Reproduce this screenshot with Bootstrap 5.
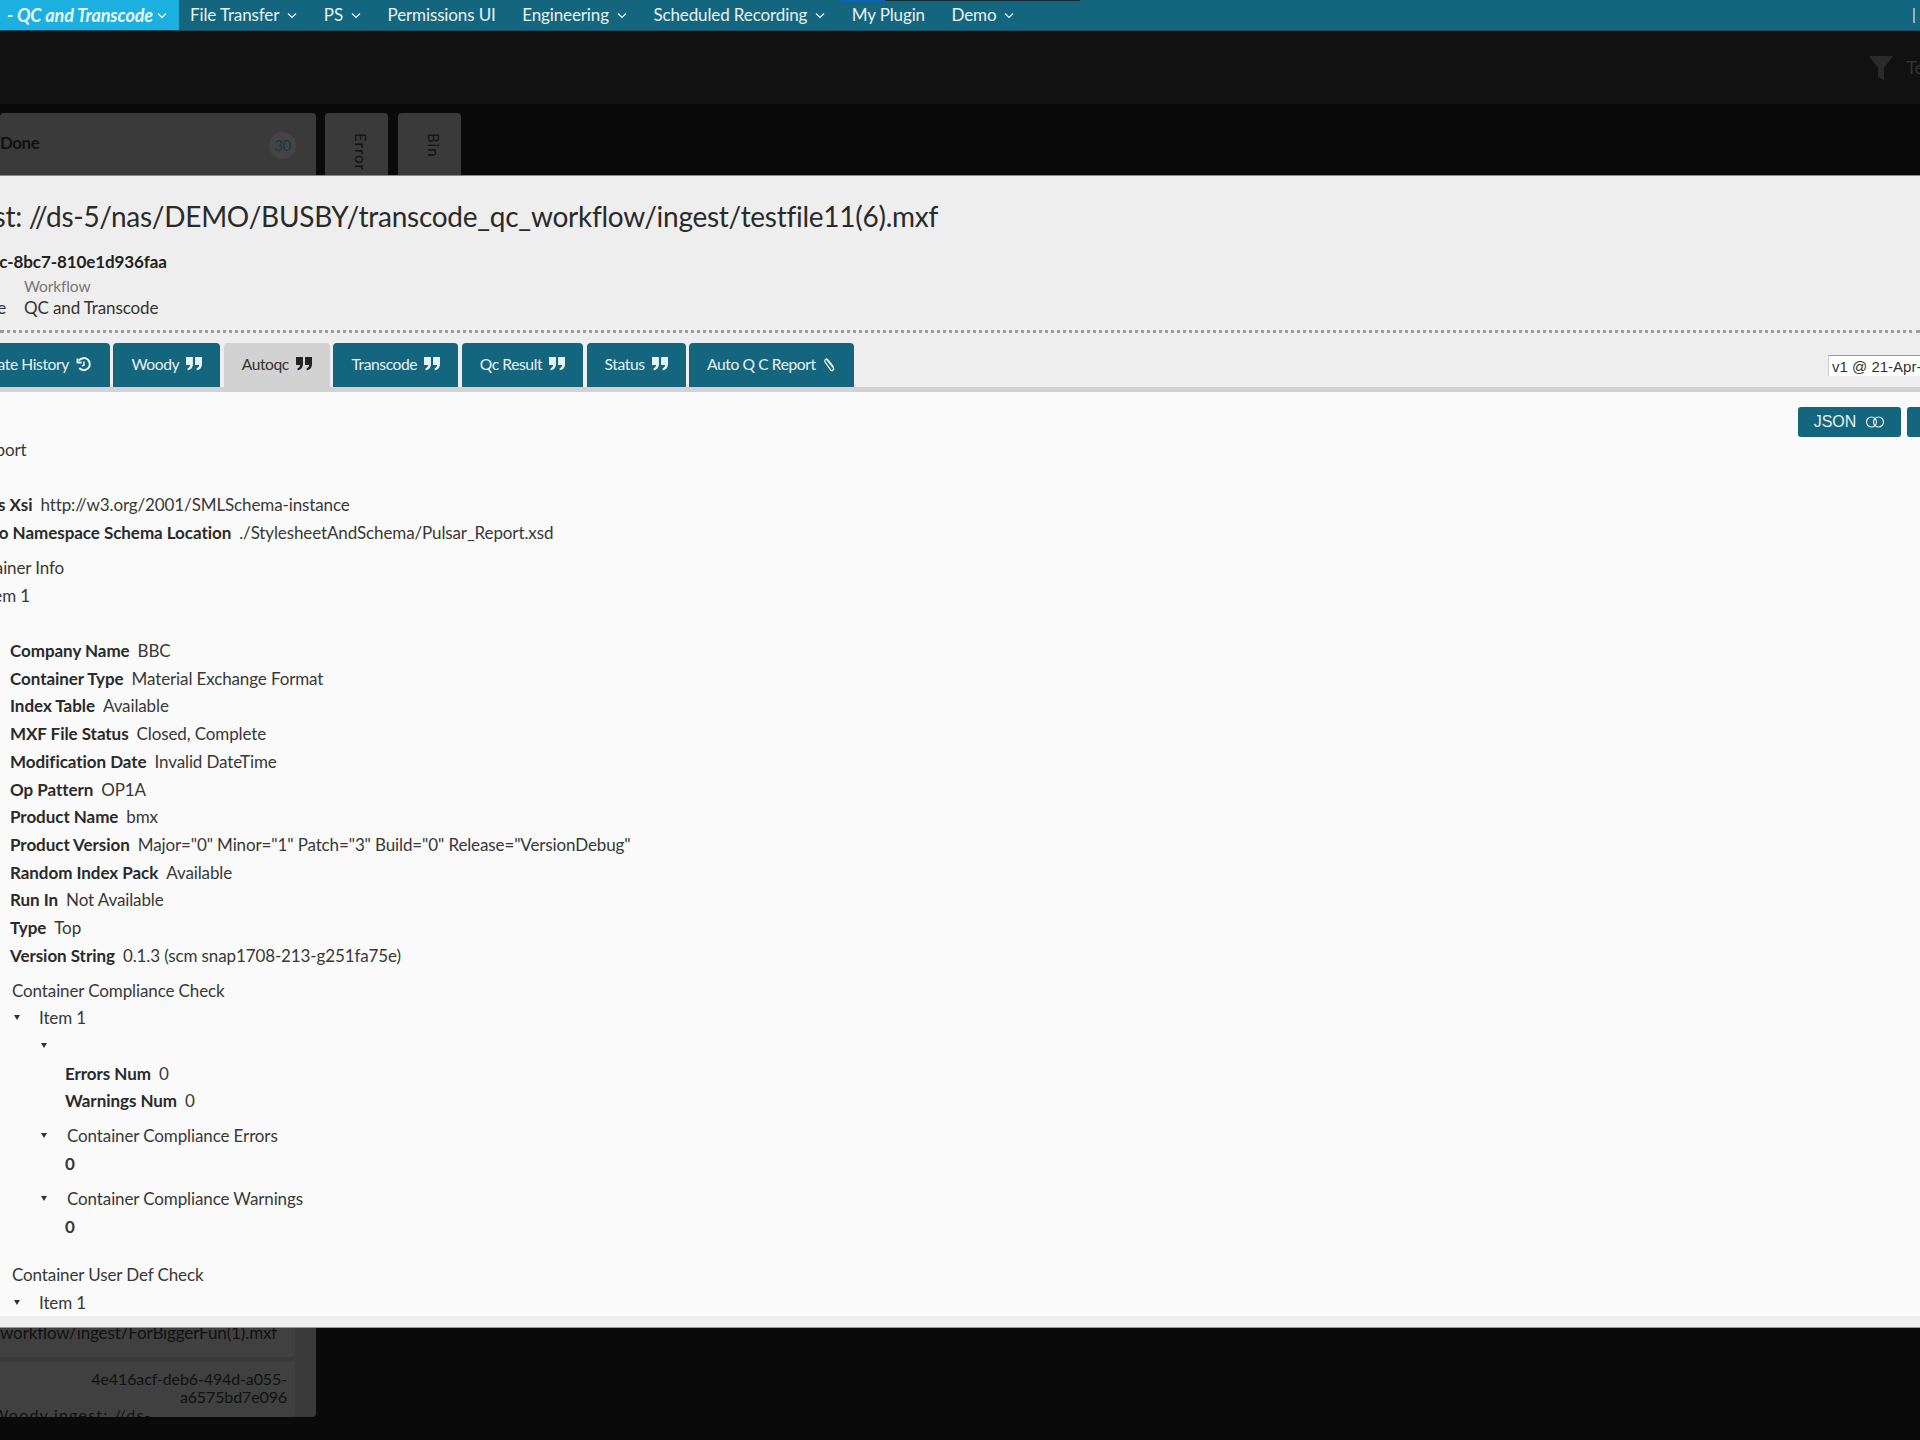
<!DOCTYPE html>
<html lang="en">
<head>
<meta charset="utf-8">
<title>QC and Transcode</title>
<link href="https://cdn.jsdelivr.net/npm/bootstrap@5.3.0/dist/css/bootstrap.min.css" rel="stylesheet">
<style>
html,body{height:1440px;overflow:hidden}
body{background:#0a0a0a;font-family:Lato,"Liberation Sans",sans-serif;font-size:17px;color:#333;letter-spacing:-.12px;position:relative}
.topbar{height:31px;background:#14667f;border-bottom:1px solid #0e4f63;padding:0;flex-wrap:nowrap;justify-content:flex-start}
.topbar .navbar-nav .nav-link{color:#e8f1f4;height:30px;line-height:30px;padding:0;font-size:17px;display:flex;align-items:center;gap:8px;white-space:nowrap}
.topbar .navbar-nav{gap:26.500px;align-items:center}
.nav-active{background:#1cb0e0;width:179px;height:30px;margin-right:11px;font-style:italic;font-weight:700;color:#e9f7fc;display:flex;align-items:center;justify-content:flex-end;padding-right:12px;gap:4px;white-space:nowrap;font-size:18px;letter-spacing:-.1px}
.top-sliver{position:absolute;top:0;left:839px;width:241px;height:1px;background:#1b2b33;border-left:46px solid #0a66c2}
.pipe{position:absolute;right:5px;top:8px;width:2px;height:15px;background:#8fb5c2}
.toolbar{height:73px;background:#111;gap:12px}
.funnel-txt{color:#333;font-size:18px;margin-right:-18px}
.board{height:1336px;padding-top:9px;gap:9px}
.col-done{width:316px;height:1304px;background:#3a3a3a;border-radius:4px;color:#111;position:relative}
.col-done-head{height:62px;padding:17px 0 0;font-weight:700;letter-spacing:-.5px}
.count-dot{position:absolute;left:269px;top:19px;width:27px;height:27px;border-radius:50%;background:#444;color:#1c3540;text-align:center;line-height:27px;font-size:15px;font-weight:400}
.side-col{width:63px;height:62px;background:#3a3a3a;border-radius:4px 4px 0 0;color:#111;writing-mode:vertical-rl;padding:20px 0 0 8px;letter-spacing:1px;font-size:15px;line-height:55px;overflow:hidden}
.side-stack{gap:10px}
.done-cards{width:295px;gap:5px}
.done-card{background:#404040;border-radius:0 0 4px 0;overflow:hidden}
.done-a{height:30px;white-space:nowrap;font-size:17px;line-height:12px}
.done-b{height:55px;text-align:right;padding:8px 8px 0 0;line-height:18px;font-size:16px}
.done-woody{text-align:left;margin-left:-8px;white-space:nowrap;font-size:16px;letter-spacing:1.2px}
.sheet{position:absolute;top:175px;left:0;right:0;height:1153px;overflow:hidden;background:#eee;border-top:1px solid #8a8a8a;border-bottom:1px solid #9a9a9a;display:flex;flex-direction:column}
.sheet-head{height:157px;border-bottom:3px dotted #9d9d9d;color:#222;flex:none}
.sheet-title{font-size:28px;font-weight:400;margin:20px 0 0 -151px;line-height:40px;white-space:nowrap;letter-spacing:-.27px;color:#2a2a2a}
.sheet-uuid{font-weight:700;font-size:17px;margin:14px 0 0 -148px;line-height:24px;white-space:nowrap;letter-spacing:-.1px;color:#222}
.meta{display:grid;grid-template-columns:46px auto;column-gap:18px;margin:2px 0 0 -40px;justify-content:start}
.meta-cap{grid-column:2;color:#777;font-size:15.500px;line-height:21px}
.meta-lab,.meta-val{line-height:22px;color:#333}
.meta-lab{text-align:right}
.tab-row{height:59px;padding-top:10px;border-bottom:5px solid #d2d2d2;flex:none;gap:3.500px;align-items:flex-start}
.tab-btn{height:44px;background:#14667f;color:#e8f1f4;border-radius:4px 4px 0 0;display:flex;align-items:center;gap:7px;padding:0 18px;font-size:15.600px;white-space:nowrap;letter-spacing:-.4px}
.tab-first{margin-left:-48px}
.tab-on{background:#d2d2d2;color:#333}
.tab-btn svg{margin-top:-2px}
.ver-sel{font:15px "Liberation Sans",sans-serif;letter-spacing:0;background:#fff;border:0;border-top:1px solid #999;border-left:1px solid #ccc;height:21px;width:200px;margin:12px -108px 0 auto;padding:0 3px;color:#333;appearance:none;border-radius:0}
.sheet-body{flex:1 1 auto;background:#fafafa;padding-top:15px;overflow:hidden;min-height:0;margin-bottom:11px;color:#383838}
.act-btn{height:30px;width:103px;background:#14667f;color:#e8f1f4;border-radius:3px;font:16px "Liberation Sans",sans-serif;letter-spacing:0;display:flex;align-items:center;justify-content:center;gap:9px;border:0;padding:0;margin-left:6px}
.act-wrap{margin-right:-90px}
.tree{margin:29px 0 0 -72px;line-height:27.7px}
.t-line,.t-kv{height:27.7px;white-space:nowrap}
.t-kv b{color:#2a2a2a;margin-right:8px;font-weight:700;letter-spacing:-.05px}
.t-arrow{position:absolute;width:0;height:0;border:3.500px solid transparent;border-top:5px solid #333;border-bottom:0;left:2px;top:11px}
.lvl-root{padding-left:31px}
.lvl-item{padding-left:24px}
.lvl-fields{padding-left:27px}
.t-group{margin:7.3px 0 0 0;position:relative}
.t-group-top{margin-left:2px}
.t-sub{padding-left:27px;position:relative}
.t-sub2{position:relative;margin-bottom:21px}
.t-kv-in{padding-left:26px}
.t-head-in{padding-left:28px}
.t-val-in{padding-left:26px;font-weight:700}
.t-last{margin-left:2px}
</style>
</head>
<body>
<nav class="navbar navbar-expand topbar">
  <div class="nav-active">- QC and Transcode <svg width="10" height="7" viewBox="0 0 10 7"><path d="M1 1.500l4 4 4-4" fill="none" stroke="#e9f7fc" stroke-width="1.300"/></svg></div>
  <ul class="navbar-nav">
    <li class="nav-item"><a class="nav-link" href="#">File Transfer <svg width="10" height="7" viewBox="0 0 10 7"><path d="M1 1.500l4 4 4-4" fill="none" stroke="#e8f1f4" stroke-width="1.200"/></svg></a></li>
    <li class="nav-item"><a class="nav-link" href="#">PS <svg width="10" height="7" viewBox="0 0 10 7"><path d="M1 1.500l4 4 4-4" fill="none" stroke="#e8f1f4" stroke-width="1.200"/></svg></a></li>
    <li class="nav-item"><a class="nav-link" href="#">Permissions UI</a></li>
    <li class="nav-item"><a class="nav-link" href="#">Engineering <svg width="10" height="7" viewBox="0 0 10 7"><path d="M1 1.500l4 4 4-4" fill="none" stroke="#e8f1f4" stroke-width="1.200"/></svg></a></li>
    <li class="nav-item"><a class="nav-link" href="#">Scheduled Recording <svg width="10" height="7" viewBox="0 0 10 7"><path d="M1 1.500l4 4 4-4" fill="none" stroke="#e8f1f4" stroke-width="1.200"/></svg></a></li>
    <li class="nav-item"><a class="nav-link" href="#">My Plugin</a></li>
    <li class="nav-item"><a class="nav-link" href="#">Demo <svg width="10" height="7" viewBox="0 0 10 7"><path d="M1 1.500l4 4 4-4" fill="none" stroke="#e8f1f4" stroke-width="1.200"/></svg></a></li>
  </ul>
</nav>
<div class="top-sliver"></div>
<div class="pipe"></div>
<div class="toolbar d-flex justify-content-end align-items-center">
  <svg width="26" height="26" viewBox="0 0 26 26"><path d="M1 1h24L16 13v12l-6-3V13z" fill="#2a2a2a"/></svg>
  <span class="funnel-txt">Test</span>
</div>
<div class="board d-flex">
  <div class="col-done d-flex flex-column justify-content-between">
    <div class="col-done-head">Done<span class="count-dot">30</span></div>
    <div class="done-cards d-flex flex-column">
      <div class="done-card done-a">workflow/ingest/ForBiggerFun(1).mxf</div>
      <div class="done-card done-b"><div>4e416acf-deb6-494d-a055-<br>a6575bd7e096</div><div class="done-woody">Woody ingest: //ds-</div></div>
    </div>
  </div>
  <div class="d-flex side-stack">
    <div class="side-col">Error</div>
    <div class="side-col">Bin</div>
  </div>
</div>

<section class="sheet">
  <div class="sheet-head">
    <div class="sheet-title">Woody ingest: //ds-5/nas/DEMO/BUSBY/transcode_qc_workflow/ingest/testfile11(6).mxf</div>
    <div class="sheet-uuid">e3a1f2b4-7c1d-4f9c-8bc7-810e1d936faa</div>
    <div class="meta">
      <div class="meta-cap">Workflow</div>
      <div class="meta-lab">Name</div><div class="meta-val">QC and Transcode</div>
    </div>
  </div>
  <div class="tab-row d-flex">
    <div class="tab-btn tab-first">Update History
      <svg width="16" height="15" viewBox="0 0 16 15"><path d="M3 3.500A6 6 0 1 1 3.200 11M1.500 1.500v4h4" fill="none" stroke="#e8f1f4" stroke-width="2"/><path d="M8 4.500V8l-2 1" fill="none" stroke="#e8f1f4" stroke-width="1.500"/></svg></div>
    <div class="tab-btn">Woody <svg width="16" height="14" viewBox="0 0 15 13"><path d="M0 0h6.500v6.500C6.500 10 4.500 12 1.500 12.500V10.500C3 10 3.800 8.800 3.800 7.500H0zM8.500 0H15v6.500C15 10 13 12 10 12.500V10.500C11.500 10 12.300 8.800 12.300 7.500H8.500z" fill="#e8f1f4"/></svg></div>
    <div class="tab-btn tab-on">Autoqc <svg width="16" height="14" viewBox="0 0 15 13"><path d="M0 0h6.500v6.500C6.500 10 4.500 12 1.500 12.500V10.500C3 10 3.800 8.800 3.800 7.500H0zM8.500 0H15v6.500C15 10 13 12 10 12.500V10.500C11.500 10 12.300 8.800 12.300 7.500H8.500z" fill="#222"/></svg></div>
    <div class="tab-btn">Transcode <svg width="16" height="14" viewBox="0 0 15 13"><path d="M0 0h6.500v6.500C6.500 10 4.500 12 1.500 12.500V10.500C3 10 3.800 8.800 3.800 7.500H0zM8.500 0H15v6.500C15 10 13 12 10 12.500V10.500C11.500 10 12.300 8.800 12.300 7.500H8.500z" fill="#e8f1f4"/></svg></div>
    <div class="tab-btn">Qc Result <svg width="16" height="14" viewBox="0 0 15 13"><path d="M0 0h6.500v6.500C6.500 10 4.500 12 1.500 12.500V10.500C3 10 3.800 8.800 3.800 7.500H0zM8.500 0H15v6.500C15 10 13 12 10 12.500V10.500C11.500 10 12.300 8.800 12.300 7.500H8.500z" fill="#e8f1f4"/></svg></div>
    <div class="tab-btn">Status <svg width="16" height="14" viewBox="0 0 15 13"><path d="M0 0h6.500v6.500C6.500 10 4.500 12 1.500 12.500V10.500C3 10 3.800 8.800 3.800 7.500H0zM8.500 0H15v6.500C15 10 13 12 10 12.500V10.500C11.500 10 12.300 8.800 12.300 7.500H8.500z" fill="#e8f1f4"/></svg></div>
    <div class="tab-btn">Auto Q C Report <svg width="13" height="15" viewBox="0 0 13 15"><path d="M3 1.500l7.500 9.500c1 1.500-1.500 3.500-2.800 2L2 5C1 3.500 3 1 4.500 2.500l6 7.500" fill="none" stroke="#e8f1f4" stroke-width="1.300"/></svg></div>
    <select class="ver-sel" aria-label="Version"><option>v1 @ 21-Apr-2023 10:12</option></select>
  </div>
  <div class="sheet-body">
    <div class="float-end d-flex act-wrap">
      <button class="act-btn" type="button">JSON <svg width="20" height="12" viewBox="0 0 20 12"><circle cx="6.500" cy="6" r="5" fill="none" stroke="#e8f1f4" stroke-width="1.200"/><circle cx="13.500" cy="6" r="5" fill="none" stroke="#e8f1f4" stroke-width="1.200"/></svg></button>
      <button class="act-btn" type="button">XML</button>
    </div>
    <div class="tree">
      <div class="t-line">Pulsar Report</div>
      <div class="t-line"></div>
      <div class="lvl-root">
        <div class="t-kv"><b>Xmlns Xsi</b>http://w3.org/2001/SMLSchema-instance</div>
        <div class="t-kv"><b>Xsi No Namespace Schema Location</b>./StylesheetAndSchema/Pulsar_Report.xsd</div>
        <div class="t-group">
          <div class="t-line">Container Info</div>
          <div class="lvl-item">
            <div class="t-line">Item 1</div>
            <div class="t-line"></div>
            <div class="lvl-fields">
              <div class="t-kv"><b>Company Name</b>BBC</div>
              <div class="t-kv"><b>Container Type</b>Material Exchange Format</div>
              <div class="t-kv"><b>Index Table</b>Available</div>
              <div class="t-kv"><b>MXF File Status</b>Closed, Complete</div>
              <div class="t-kv"><b>Modification Date</b>Invalid DateTime</div>
              <div class="t-kv"><b>Op Pattern</b>OP1A</div>
              <div class="t-kv"><b>Product Name</b>bmx</div>
              <div class="t-kv"><b>Product Version</b>Major="0" Minor="1" Patch="3" Build="0" Release="VersionDebug"</div>
              <div class="t-kv"><b>Random Index Pack</b>Available</div>
              <div class="t-kv"><b>Run In</b>Not Available</div>
              <div class="t-kv"><b>Type</b>Top</div>
              <div class="t-kv"><b>Version String</b>0.1.3 (scm snap1708-213-g251fa75e)</div>
              <div class="t-group t-group-top">
                <div class="t-line">Container Compliance Check</div>
                <div class="t-sub">
                  <span class="t-arrow"></span>
                  <div class="t-line">Item 1</div>
                  <div class="t-sub2">
                    <span class="t-arrow"></span>
                    <div class="t-line"></div>
                    <div class="t-kv t-kv-in"><b>Errors Num</b>0</div>
                    <div class="t-kv t-kv-in"><b>Warnings Num</b>0</div>
                    <div class="t-group">
                      <span class="t-arrow"></span>
                      <div class="t-line t-head-in">Container Compliance Errors</div>
                      <div class="t-line t-val-in">0</div>
                    </div>
                    <div class="t-group">
                      <span class="t-arrow"></span>
                      <div class="t-line t-head-in">Container Compliance Warnings</div>
                      <div class="t-line t-val-in">0</div>
                    </div>
                  </div>
                </div>
              </div>
              <div class="t-last">
                <div class="t-line">Container User Def Check</div>
                <div class="t-sub">
                  <span class="t-arrow"></span>
                  <div class="t-line">Item 1</div>
                </div>
              </div>
            </div>
          </div>
        </div>
      </div>
    </div>
  </div>
</section>
</body>
</html>
